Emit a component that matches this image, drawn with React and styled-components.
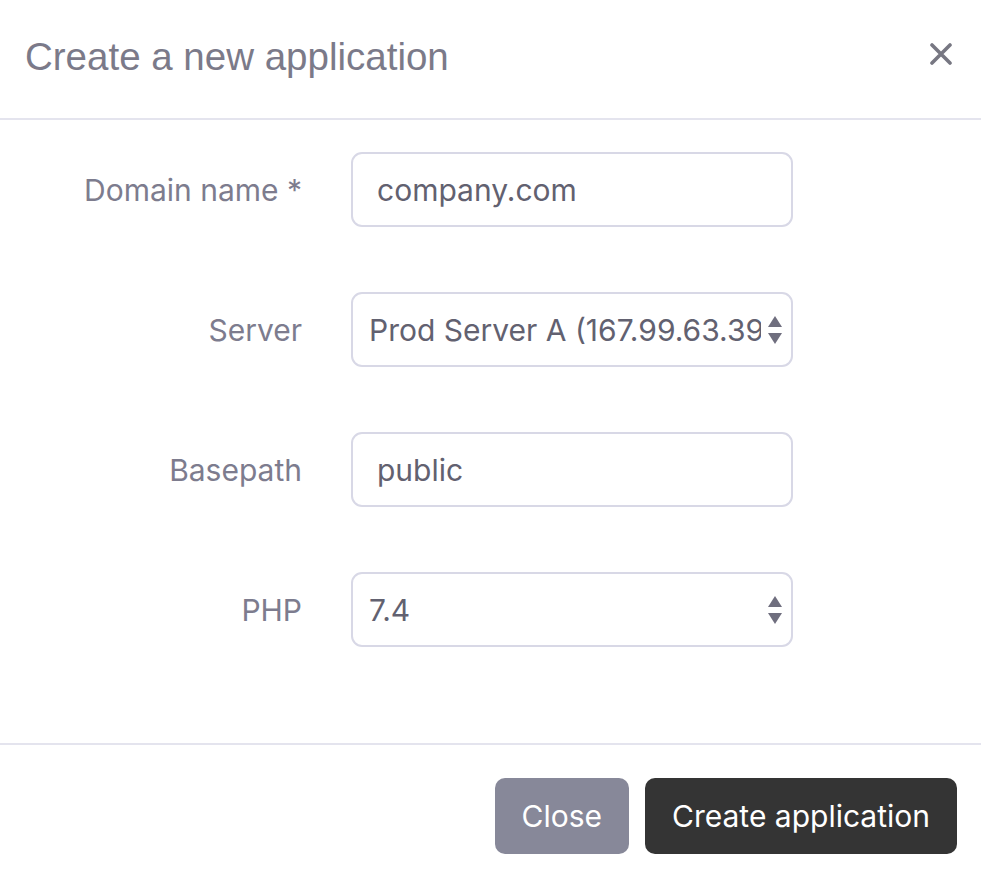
import * as React from 'react';
import styled, { createGlobalStyle } from 'styled-components';

const GlobalStyle = createGlobalStyle`
  html, body {
    margin: 0;
    padding: 0;
    background: #ffffff;
  }
  body {
    font-family: Inter, "Liberation Sans", sans-serif;
  }
`;

const fields = [
  { label: 'Domain name *', value: 'company.com', type: 'input' },
  { label: 'Server', value: 'Prod Server A (167.99.63.39)', type: 'select' },
  { label: 'Basepath', value: 'public', type: 'input' },
  { label: 'PHP', value: '7.4', type: 'select' },
];

const SelectArrows = () => (
  <svg width="16" height="32" viewBox="0 0 16 32">
    <path d="M8 2 L15 13 L1 13 Z" fill="#6f6e7e" />
    <path d="M1 19 L15 19 L8 30 Z" fill="#6f6e7e" />
  </svg>
);

const App = () => {
  return (
    <>
      <GlobalStyle />
      <Modal>
        <Header>
          <Title>Create a new application</Title>
          <CloseIcon aria-label="Close">
            <svg width="22" height="22" viewBox="0 0 22 22">
              <path
                d="M2 2 L20 20 M20 2 L2 20"
                stroke="#777782"
                strokeWidth="3.6"
                strokeLinecap="round"
              />
            </svg>
          </CloseIcon>
        </Header>
        <Body>
          <Form>
            {fields.map((field) => (
              <React.Fragment key={field.label}>
                <Label>{field.label}</Label>
                {field.type === 'input' ? (
                  <TextInput defaultValue={field.value} />
                ) : (
                  <Select>
                    <SelectValue>{field.value}</SelectValue>
                    <SelectArrows />
                  </Select>
                )}
              </React.Fragment>
            ))}
          </Form>
        </Body>
        <Footer>
          <Button $variant="secondary">Close</Button>
          <Button $variant="primary">Create application</Button>
        </Footer>
      </Modal>
    </>
  );
};

const Modal = styled.div`
  width: 981px;
  height: 882px;
  background: #ffffff;
  display: flex;
  flex-direction: column;
`;
const Header = styled.div`
  box-sizing: border-box;
  height: 120px;
  padding: 0 29px 0 25px;
  display: flex;
  align-items: center;
  justify-content: space-between;
  border-bottom: 2px solid #e4e4ee;
`;
const Title = styled.h2`
  margin: 0;
  font-family: "Liberation Sans", Arial, sans-serif;
  font-weight: 400;
  font-size: 38.5px;
  color: #7b7a89;
  padding-bottom: 4px;
`;
const CloseIcon = styled.button`
  border: none;
  background: none;
  padding: 0;
  display: flex;
  cursor: pointer;
  margin-bottom: 10px;
`;
const Body = styled.div`
  padding: 32px 0 96px;
  border-bottom: 2px solid #e4e4ee;
`;
const Form = styled.div`
  display: grid;
  grid-template-columns: 302px 442px;
  column-gap: 49px;
  row-gap: 65px;
  align-items: center;
`;
const Label = styled.label`
  text-align: right;
  font-size: 30px;
  color: #7d7c8e;
`;
const fieldBox = `
  box-sizing: border-box;
  height: 75px;
  width: 442px;
  border: 2px solid #d8d8e6;
  border-radius: 11px;
  background: #ffffff;
  font-family: Inter, "Liberation Sans", sans-serif;
  font-size: 30px;
  color: #626170;
`;
const TextInput = styled.input`
  ${fieldBox}
  padding: 0 24px;
  outline: none;
`;
const Select = styled.div`
  ${fieldBox}
  display: flex;
  align-items: center;
  gap: 6px;
  padding: 0 8px 0 16px;
`;
const SelectValue = styled.span`
  flex: 1;
  overflow: hidden;
  white-space: nowrap;
`;
const Footer = styled.div`
  display: flex;
  justify-content: flex-end;
  gap: 16px;
  padding: 33px 24px 0;
`;
const Button = styled.button`
  height: 76px;
  padding: 0 27px;
  border: none;
  border-radius: 10px;
  font-family: Inter, "Liberation Sans", sans-serif;
  font-size: 30px;
  color: #ffffff;
  background: ${(p) => (p.$variant === 'primary' ? '#343434' : '#878899')};
  cursor: pointer;
`;

export default App;
